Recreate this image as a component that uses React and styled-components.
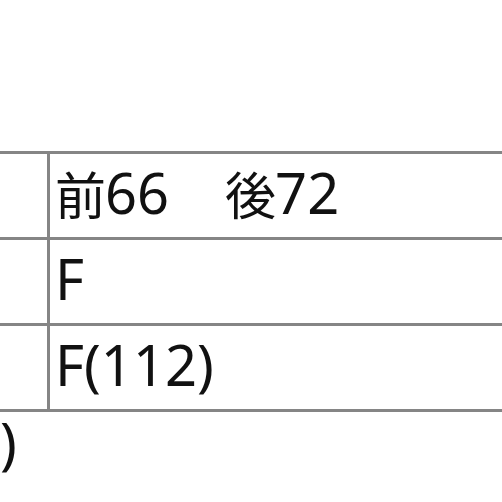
import styled, { createGlobalStyle } from 'styled-components';

const GlobalStyle = createGlobalStyle`
  html, body {
    margin: 0;
    padding: 0;
    background: #ffffff;
    overflow: hidden;
  }
  body {
    font-family: "Noto Sans", "Noto Sans CJK JP", sans-serif;
    color: #111111;
  }
`;

const Page = styled.div`
  box-sizing: border-box;
  padding-top: 151px;
  width: 502px;
  height: 502px;
  overflow: hidden;
`;

const Table = styled.table`
  border-collapse: collapse;
  margin-left: -8px;
  width: 640px;
  font-size: 56px;
  line-height: 1;
`;

const Row = styled.tr`
  height: ${(p) => p.$height || 86}px;
`;

const Cell = styled.td`
  border: 3px solid #858585;
  padding: 0 5px 8px;
  vertical-align: middle;
  text-align: left;
  white-space: nowrap;
  width: ${(p) => (p.$label ? '42px' : 'auto')};
`;

const NoteCell = styled(Cell)`
  vertical-align: top;
  padding: 2px 5px 0;
  border-bottom: none;
`;

const Kanji = styled.span`
  font-family: "Noto Sans CJK JP", sans-serif;
  font-size: 51px;
  letter-spacing: -1px;
  position: relative;
  top: 1px;
`;

export default function App() {
  return (
    <>
      <GlobalStyle />
      <Page>
        <Table>
          <tbody>
            <Row>
              <Cell $label />
              <Cell>
                <Kanji>前</Kanji>66　<Kanji>後</Kanji>72
              </Cell>
            </Row>
            <Row>
              <Cell $label />
              <Cell>F</Cell>
            </Row>
            <Row>
              <Cell $label />
              <Cell>F(112)</Cell>
            </Row>
            <Row $height={110}>
              <NoteCell colSpan={2}>)</NoteCell>
            </Row>
          </tbody>
        </Table>
      </Page>
    </>
  );
}
